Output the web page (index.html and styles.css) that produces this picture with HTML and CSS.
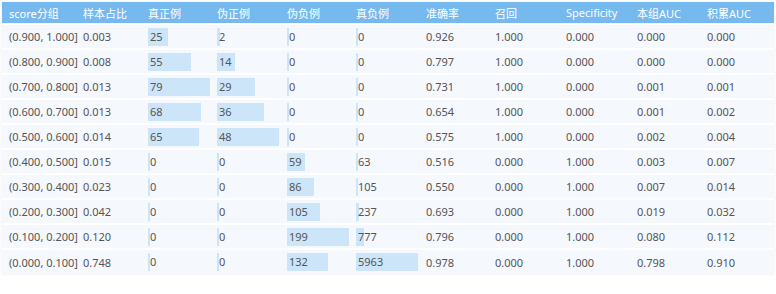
FILE: index.html
```html
<!DOCTYPE html>
<html lang="zh">
<head>
    <meta charset="UTF-8">
    <title>分组统计</title>
    <link rel="stylesheet" href="styles.css">
</head>
<body>
    <table class="tabella">
        <colgroup>
            <col style="width:74px"><col style="width:66px"><col style="width:69px"><col style="width:70px">
            <col style="width:69px"><col style="width:69px"><col style="width:69px"><col style="width:71px">
            <col style="width:71px"><col style="width:70px"><col style="width:74px">
        </colgroup>
        <thead>
            <tr>
                <th>score分组</th><th>样本占比</th><th class="col-barra">真正例</th><th class="col-barra">伪正例</th>
                <th class="col-barra">伪负例</th><th class="col-barra">真负例</th><th>准确率</th><th>召回</th>
                <th>Specificity</th><th>本组AUC</th><th>积累AUC</th>
            </tr>
        </thead>
        <tbody id="corpo"></tbody>
    </table>
    <script src="script.js"></script>
</body>
</html>
```

FILE: styles.css
```css
* {
    box-sizing: border-box;
    margin: 0;
    padding: 0;
}

body {
    font-family: 'Noto Sans', 'Noto Sans CJK SC', sans-serif;
    background: #fff;
    padding: 2px;
}

.tabella {
    width: 772px;
    table-layout: fixed;
    border-collapse: collapse;
    font-size: 11px;
    color: #555;
    box-shadow: 0 0 3px rgba(0, 0, 0, 0.08);
}

.tabella th {
    height: 22px;
    background: #76b9ef;
    color: #fff;
    font-weight: 400;
    text-align: left;
    padding: 0 7px;
    white-space: nowrap;
}

.tabella th.col-barra {
    padding-left: 6px;
}

.tabella td {
    height: 25px;
    background: #f5f8fd;
    border-top: 2px solid #fff;
    padding: 0 7px;
    white-space: nowrap;
}

.tabella td.col-barra {
    padding-left: 6px;
    padding-right: 0;
}

.barra {
    height: 18px;
    line-height: 18px;
    padding-left: 2px;
    background: #cde5f9;
    white-space: nowrap;
    overflow: visible;
}
```

FILE: script.js
```js
const righe = [
    ['(0.900, 1.000]', '0.003', 25, 2, 0, 0, '0.926', '1.000', '0.000', '0.000', '0.000'],
    ['(0.800, 0.900]', '0.008', 55, 14, 0, 0, '0.797', '1.000', '0.000', '0.000', '0.000'],
    ['(0.700, 0.800]', '0.013', 79, 29, 0, 0, '0.731', '1.000', '0.000', '0.001', '0.001'],
    ['(0.600, 0.700]', '0.013', 68, 36, 0, 0, '0.654', '1.000', '0.000', '0.001', '0.002'],
    ['(0.500, 0.600]', '0.014', 65, 48, 0, 0, '0.575', '1.000', '0.000', '0.002', '0.004'],
    ['(0.400, 0.500]', '0.015', 0, 0, 59, 63, '0.516', '0.000', '1.000', '0.003', '0.007'],
    ['(0.300, 0.400]', '0.023', 0, 0, 86, 105, '0.550', '0.000', '1.000', '0.007', '0.014'],
    ['(0.200, 0.300]', '0.042', 0, 0, 105, 237, '0.693', '0.000', '1.000', '0.019', '0.032'],
    ['(0.100, 0.200]', '0.120', 0, 0, 199, 777, '0.796', '0.000', '1.000', '0.080', '0.112'],
    ['(0.000, 0.100]', '0.748', 0, 0, 132, 5963, '0.978', '0.000', '1.000', '0.798', '0.910']
];

const LARGHEZZA_MAX = 62;
const massimi = [2, 3, 4, 5].map(c => Math.max(...righe.map(r => r[c])));
const corpo = document.getElementById('corpo');

righe.forEach(function (riga) {
    const tr = document.createElement('tr');
    riga.forEach(function (valore, i) {
        const td = document.createElement('td');
        if (i >= 2 && i <= 5) {
            td.className = 'col-barra';
            const barra = document.createElement('div');
            barra.className = 'barra';
            barra.style.width = (valore / massimi[i - 2] * LARGHEZZA_MAX).toFixed(1) + 'px';
            barra.textContent = valore;
            td.appendChild(barra);
        } else {
            td.textContent = valore;
        }
        tr.appendChild(td);
    });
    corpo.appendChild(tr);
});
```
